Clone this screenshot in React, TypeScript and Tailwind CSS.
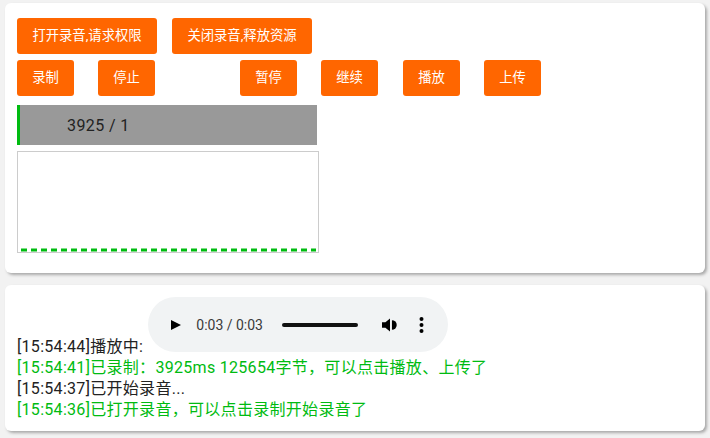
import React from "react";

const FONT = 'Roboto, "Noto Sans CJK SC", sans-serif';

function Btn({ children, className = "" }: { children: React.ReactNode; className?: string }) {
  return (
    <button
      className={`h-[36px] shrink-0 rounded-[3px] bg-[#ff6600] px-[15px] text-[13.333px] leading-[36px] text-white whitespace-nowrap ${className}`}
    >
      {children}
    </button>
  );
}

function AudioPill() {
  return (
    <span className="ml-[5px] inline-block h-[55px] w-[300px] overflow-hidden rounded-full bg-[#f1f3f4] align-baseline tracking-normal">
      <span className="flex h-full items-center pl-[23px]">
        <svg width="10" height="10" viewBox="0 0 10 10" className="shrink-0">
          <path d="M0 0L10 5L0 10Z" fill="#000" />
        </svg>
        <span className="ml-[15px] w-[70px] shrink-0 text-[14px] leading-none text-[#3a3a3a]">0:03 / 0:03</span>
        <span className="ml-[16px] h-[4px] w-[76px] shrink-0 rounded-full bg-[#111]" />
        <svg width="16" height="14" viewBox="0 0 15 13" className="ml-[24px] shrink-0">
          <path d="M0 4H3.2L7.5 0.3V12.7L3.2 9H0Z" fill="#000" />
          <path d="M9.3 2A4.5 4.5 0 0 1 9.3 11Z" fill="#000" />
        </svg>
        <svg width="5" height="16" viewBox="0 0 5 16" className="ml-[21px] shrink-0">
          <circle cx="2.5" cy="2" r="2" fill="#000" />
          <circle cx="2.5" cy="8" r="2" fill="#000" />
          <circle cx="2.5" cy="14" r="2" fill="#000" />
        </svg>
      </span>
    </span>
  );
}

export default function App() {
  return (
    <div className="min-h-[438px] bg-[#f2f2f2] px-[5px] pt-[3px]" style={{ fontFamily: FONT }}>
      <div className="rounded-[6px] bg-white px-[12px] pb-[20px] pt-[12px] shadow-[2px_2px_3px_#aaa]">
        <div className="flex py-[3px]">
          <Btn className="w-[140px]">打开录音,请求权限</Btn>
          <Btn className="ml-[15px] w-[140px]">关闭录音,释放资源</Btn>
        </div>
        <div className="flex py-[3px]">
          <Btn className="w-[57px]">录制</Btn>
          <Btn className="ml-[24px] w-[57px]">停止</Btn>
          <Btn className="ml-[85px] w-[57px]">暂停</Btn>
          <Btn className="ml-[24px] w-[57px]">继续</Btn>
          <Btn className="ml-[25px] w-[57px]">播放</Btn>
          <Btn className="ml-[24px] w-[57px]">上传</Btn>
        </div>
        <div className="mt-[6px] flex h-[40px] w-[300px] bg-[#999999]">
          <div className="h-full w-[3px] bg-[#00bb11]" />
          <div className="pl-[47px] text-[16px] leading-[41px] tracking-[0.4px] text-[#222]">3925 / 1</div>
        </div>
        <div className="mt-[6px] h-[102px] w-[302px] border border-[#cccccc]">
          <svg width="300" height="100" viewBox="0 0 300 100" className="block">
            <line x1="3" y1="98" x2="298" y2="98" stroke="#00bb11" strokeWidth="3" strokeDasharray="6 4" />
          </svg>
        </div>
      </div>

      <div className="mt-[12px] rounded-[6px] bg-white px-[12px] pb-[11px] pt-[12px] text-[16px] leading-[21px] tracking-[0.3px] shadow-[2px_2px_3px_#aaa]">
        <div className="text-[#222]">
          [15:54:44]播放中:
          <AudioPill />
        </div>
        <div className="text-[#00bb11]">[15:54:41]已录制：3925ms 125654字节，可以点击播放、上传了</div>
        <div className="text-[#222]">[15:54:37]已开始录音...</div>
        <div className="text-[#00bb11]">[15:54:36]已打开录音，可以点击录制开始录音了</div>
      </div>
    </div>
  );
}
